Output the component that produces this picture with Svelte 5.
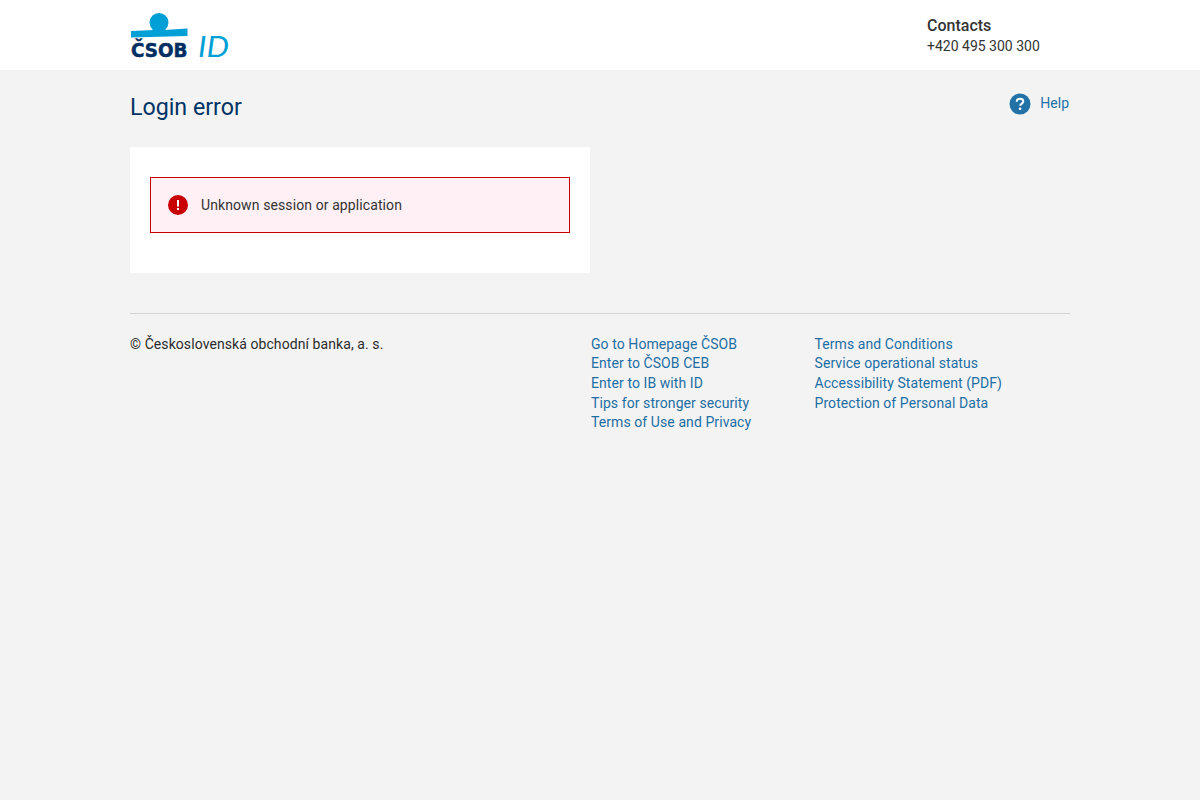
<script>
  const col1 = ['Go to Homepage ČSOB', 'Enter to ČSOB CEB', 'Enter to IB with ID', 'Tips for stronger security', 'Terms of Use and Privacy'];
  const col2 = ['Terms and Conditions', 'Service operational status', 'Accessibility Statement (PDF)', 'Protection of Personal Data'];
</script>

<header class="header">
  <div class="wrap header-in">
    <svg class="logo" width="100" height="56" viewBox="0 0 100 56" aria-label="ČSOB ID">
      <circle cx="29" cy="10.500" r="9.500" fill="#009fd6" />
      <path d="M1 19 L24 18 Q29 20 34 18 L57.500 16.500 V24 L1 25.500 Z" fill="#009fd6" />
      <text x="1" y="45" class="csob" textLength="56.500" lengthAdjust="spacingAndGlyphs">ČSOB</text>
      <text x="68" y="45" class="id" textLength="31" lengthAdjust="spacingAndGlyphs">ID</text>
    </svg>
    <div class="contacts">
      <div class="contacts-title">Contacts</div>
      <div class="contacts-phone">+420 495 300 300</div>
    </div>
  </div>
</header>

<main class="wrap">
  <div class="title-row">
    <h1>Login error</h1>
    <a class="help" href="#help">
      <svg width="22" height="22" viewBox="0 0 22 22">
        <circle cx="11" cy="11" r="10.500" fill="#2272a8" />
        <path d="M7.700 8.700 C7.700 6.800 9.200 5.800 11 5.800 C12.900 5.800 14.300 6.900 14.300 8.500 C14.300 10.500 11.200 10.700 11.200 12.800" fill="none" stroke="#fff" stroke-width="2" />
        <circle cx="11.100" cy="15.800" r="1.300" fill="#fff" />
      </svg>
      <span>Help</span>
    </a>
  </div>

  <section class="card">
    <div class="alert">
      <svg width="20" height="20" viewBox="0 0 20 20">
        <circle cx="10" cy="10" r="10" fill="#c80000" />
        <rect x="9" y="5" width="2" height="6.500" fill="#fff" />
        <rect x="9" y="13" width="2" height="2" fill="#fff" />
      </svg>
      <span>Unknown session or application</span>
    </div>
  </section>

  <footer class="footer">
    <div class="copy">© Československá obchodní banka, a. s.</div>
    <ul class="links first">
      {#each col1 as l}<li><a href="#l">{l}</a></li>{/each}
    </ul>
    <ul class="links">
      {#each col2 as l}<li><a href="#l">{l}</a></li>{/each}
    </ul>
  </footer>
</main>

<style>
  :global(body) {
    margin: 0;
    background: #f3f3f3;
    font-family: Roboto, "Liberation Sans", sans-serif;
    font-size: 14px;
    line-height: 19.6px;
    color: #2b2b2b;
  }
  .wrap {
    width: 940px;
    margin-left: 130px;
  }
  .header {
    height: 70px;
    background: #fff;
  }
  .header-in {
    display: flex;
    justify-content: space-between;
    align-items: flex-start;
    height: 70px;
  }
  .logo {
    margin-top: 12px;
    display: block;
    overflow: visible;
  }
  .csob {
    font-family: "DejaVu Sans", sans-serif;
    font-weight: 700;
    font-size: 20px;
    fill: #002d62;
    stroke: #002d62;
    stroke-width: 0.5;
  }
  .id {
    font-family: Lato, sans-serif;
    font-style: italic;
    font-weight: 400;
    font-size: 29px;
    fill: #009fd6;
  }
  .contacts {
    margin-top: 16px;
    width: 143px;
  }
  .contacts-title {
    font-size: 16px;
    font-weight: 500;
    line-height: 20px;
    color: #333;
  }
  .contacts-phone {
    line-height: 20px;
    color: #333;
  }
  .title-row {
    display: flex;
    justify-content: space-between;
    align-items: flex-start;
    padding-top: 22px;
    height: 55px;
  }
  h1 {
    margin: 0;
    font-size: 23.200px;
    font-weight: 400;
    line-height: 30px;
    color: #003366;
  }
  .help {
    display: flex;
    align-items: center;
    gap: 9px;
    margin-top: 1px;
    margin-right: 1px;
    color: #2272a8;
    text-decoration: none;
  }
  .help span {
    margin-top: -1px;
  }
  .card {
    width: 420px;
    padding: 30px 20px 40px;
    background: #fff;
  }
  .alert {
    display: flex;
    align-items: center;
    gap: 13px;
    box-sizing: border-box;
    height: 56px;
    padding-left: 17px;
    border: 1px solid #c80000;
    background: #fff0f5;
    color: #333;
  }
  .alert span {
    position: relative;
    top: 1px;
    letter-spacing: 0.1px;
  }
  .footer {
    display: flex;
    margin-top: 40px;
    padding-top: 20.800px;
    border-top: 1px solid #d4d4d4;
    letter-spacing: 0.08px;
  }
  .copy {
    width: 461px;
  }
  .links {
    list-style: none;
    margin: 0;
    padding: 0;
  }
  .first {
    width: 223.500px;
  }
  .links a {
    color: #1c6ea4;
    text-decoration: none;
  }
</style>
